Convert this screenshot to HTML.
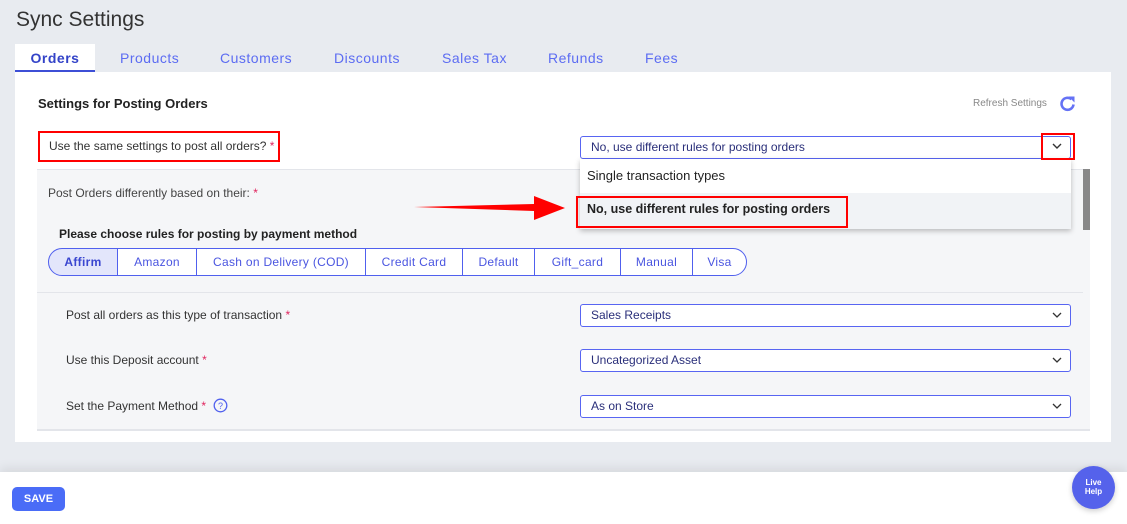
<!DOCTYPE html>
<html><head><meta charset="utf-8"><style>
*{box-sizing:border-box;margin:0;padding:0}
body{width:1127px;height:524px;overflow:hidden;background:#e8ebf0;font-family:"Liberation Sans",Arial,sans-serif;position:relative}
.abs{position:absolute}
.title{left:16px;top:8px;font-size:21px;color:#333}
.tab{top:44px;height:29px;font-size:14px;color:#5c6cf2;letter-spacing:.5px;line-height:28px}
.panel{left:15px;top:72px;width:1096px;height:370px;background:#fff}
.lbl{font-size:12px;color:#333}
.star{color:#e0245e}
.sel{position:absolute;left:580px;width:491px;height:23px;border:1px solid #5865f2;border-radius:3px;background:#fff;font-size:12px;color:#2a2f7a;line-height:21px;padding-left:10px}
.sel svg{position:absolute;right:8px;top:6px}
.seg{position:absolute;top:248px;height:28px;border:1px solid #5060ee;font-size:12px;color:#4a55e0;line-height:26px;text-align:center;background:#fff;letter-spacing:.3px}
</style></head><body>
<div class="abs title">Sync Settings</div>
<div class="abs tab" style="left:15px;width:80px;background:#fff;text-align:center;color:#3343c8;font-weight:bold;border-bottom:3px solid #3d4fd6">Orders</div>
<div class="abs tab" style="left:120px">Products</div>
<div class="abs tab" style="left:220px">Customers</div>
<div class="abs tab" style="left:334px">Discounts</div>
<div class="abs tab" style="left:442px">Sales Tax</div>
<div class="abs tab" style="left:548px">Refunds</div>
<div class="abs tab" style="left:645px">Fees</div>
<div class="abs panel"></div>
<div class="abs" style="left:38px;top:96px;font-size:13px;font-weight:bold;color:#222">Settings for Posting Orders</div>
<div class="abs" style="left:973px;top:98px;font-size:10px;color:#888">Refresh Settings</div>
<svg class="abs" style="left:1058px;top:94px" width="20" height="20" viewBox="0 0 20 20"><path d="M15.5 10.5A6 6 0 1 1 13.5 5.3" fill="none" stroke="#6572f5" stroke-width="2.6"/><path d="M10.5 2.5L16.5 2.5 16.5 8.5Z" fill="#6572f5"/></svg>
<div class="abs lbl" style="left:38px;top:131px;width:242px;height:31px;border:2.5px solid #f00;padding:6px 0 0 9px">Use the same settings to post all orders? <span class="star">*</span></div>
<div class="sel" style="top:136px">No, use different rules for posting orders</div>
<div class="abs" style="left:37px;top:169px;width:1053px;height:262px;background:#f5f6f8;border-top:1px solid #e3e5ea;border-bottom:2px solid #e3e5ea"></div>
<div class="abs" style="left:1083px;top:169px;width:7px;height:61px;background:#888"></div>
<div class="abs lbl" style="left:48px;top:186px;color:#444">Post Orders differently based on their: <span class="star">*</span></div>
<div class="abs" style="left:59px;top:227px;font-size:12px;font-weight:bold;color:#222">Please choose rules for posting by payment method</div>
<div class="seg" style="left:48px;width:70px;border-radius:14px 0 0 14px;background:#e3e6fb;font-weight:bold;color:#3a46d0">Affirm</div>
<div class="seg" style="left:117px;width:80px">Amazon</div>
<div class="seg" style="left:196px;width:170px">Cash on Delivery (COD)</div>
<div class="seg" style="left:365px;width:98px">Credit Card</div>
<div class="seg" style="left:462px;width:73px">Default</div>
<div class="seg" style="left:534px;width:87px">Gift_card</div>
<div class="seg" style="left:620px;width:73px">Manual</div>
<div class="seg" style="left:692px;width:55px;border-radius:0 14px 14px 0">Visa</div>
<div class="abs" style="left:37px;top:292px;width:1046px;height:1px;background:#e3e5ea"></div>
<div class="abs lbl" style="left:66px;top:308px">Post all orders as this type of transaction <span class="star">*</span></div>
<div class="abs lbl" style="left:66px;top:353px">Use this Deposit account <span class="star">*</span></div>
<div class="abs lbl" style="left:66px;top:399px">Set the Payment Method <span class="star">*</span></div>
<svg class="abs" style="left:213px;top:398px" width="15" height="15" viewBox="0 0 15 15"><circle cx="7.5" cy="7.5" r="6.3" fill="none" stroke="#5060ee" stroke-width="1.3"/><text x="7.5" y="11" font-size="9" text-anchor="middle" fill="#5060ee" font-family="Liberation Sans">?</text></svg>
<div class="sel" style="top:304px">Sales Receipts<svg width="10" height="8"><path d="M1 2l4 4 4-4" fill="none" stroke="#333" stroke-width="1.3"/></svg></div>
<div class="sel" style="top:349px">Uncategorized Asset<svg width="10" height="8"><path d="M1 2l4 4 4-4" fill="none" stroke="#333" stroke-width="1.3"/></svg></div>
<div class="sel" style="top:395px">As on Store<svg width="10" height="8"><path d="M1 2l4 4 4-4" fill="none" stroke="#333" stroke-width="1.3"/></svg></div>
<div class="abs" style="left:580px;top:159px;width:491px;height:70px;background:#fff;box-shadow:0 2px 5px rgba(0,0,0,.25)">
<div style="height:34px;font-size:13px;color:#222;line-height:33px;padding-left:7px">Single transaction types</div>
<div style="height:36px;background:#f1f3f6;font-size:12.5px;font-weight:bold;color:#222;line-height:32px;padding-left:7px">No, use different rules for posting orders</div>
</div>
<div class="abs" style="left:576px;top:196px;width:272px;height:32px;border:2.5px solid #f00"></div>
<div class="abs" style="left:1041px;top:133px;width:34px;height:27px;border:2.5px solid #f00"></div>
<svg class="abs" style="left:1051px;top:142px" width="12" height="8"><path d="M2 2l4 4 4-4" fill="none" stroke="#333" stroke-width="1.4"/></svg>
<svg class="abs" style="left:410px;top:192px" width="160" height="32"><path d="M4 15L124 12 124 4 155 16 124 28 124 19Z" fill="#f00"/></svg>
<div class="abs" style="left:0;top:472px;width:1127px;height:52px;background:#fff;box-shadow:0 -4px 10px rgba(0,0,0,.08)"></div>
<div class="abs" style="left:12px;top:487px;width:53px;height:24px;background:#4a6cf7;border-radius:5px;color:#fff;font-size:11px;font-weight:bold;text-align:center;line-height:24px">SAVE</div>
<div class="abs" style="left:1072px;top:466px;width:43px;height:43px;border-radius:50%;background:#5562eb;color:#fff;font-size:8px;font-weight:bold;text-align:center;line-height:9px;padding-top:12px;box-shadow:0 2px 6px rgba(0,0,0,.2)">Live<br>Help</div>
</body></html>
